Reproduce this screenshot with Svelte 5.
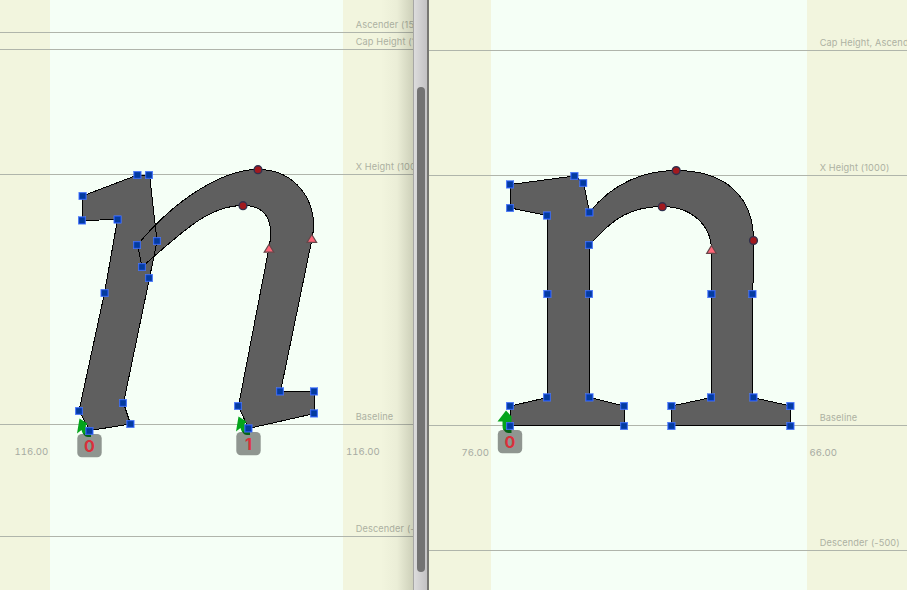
<script>
  const panes = [
    {
      id: 'italic', x: 0, width: 413, bodyX: 50, bodyW: 293, labelX: 356,
      metrics: [
        { y: 32, name: 'Ascender (1500)' },
        { y: 49, name: 'Cap Height (1450)' },
        { y: 174, name: 'X Height (1000)' },
        { y: 424, name: 'Baseline' },
        { y: 536, name: 'Descender (-500)' }
      ],
      bearings: [{ x: 14.5, y: 455, value: '116.00' }, { x: 346, y: 455, value: '116.00' }],
      contours: [
        'M137.5 175L149.5 175L157 241L149.5 278L123.500 403L130.5 424L90 430.500L79 411L104.500 293L117.500 219.500L82.500 220.500L82.500 196Z',
        'M137.5 245C175 199 223 169.500 258 169.500C294 169.500 320 200 312 239L280.500 391.500L314.500 391.500L314.500 413.500L248.500 428.500L238.500 406L269 248C274 223 268 205.500 243 205.500C210 205.500 185 229 142 267Z'
      ],
      corners: [[137.4,175],[149,175],[157,241],[149,278],[123,403],[130.4,424],[89.4,431],[79,411],[104.6,293],[117.6,219.5],[82,220.4],[82.600,196],[137,245],[142,267],[280,391.4],[314,391.4],[314,413.4],[248.4,428.4],[238,406]],
      curves: [[258, 169.7], [243, 205.7]],
      tangents: [[311.8, 238.700], [269, 248.5]],
      starts: [{ x: 89.5, y: 434, label: '0', tilt: true }, { x: 248.5, y: 432, label: '1', tilt: true }]
    },
    {
      id: 'roman', x: 429, width: 478, bodyX: 491, bodyW: 316, labelX: 820,
      metrics: [
        { y: 50, name: 'Cap Height, Ascender (1500)' },
        { y: 175, name: 'X Height (1000)' },
        { y: 425, name: 'Baseline' },
        { y: 550, name: 'Descender (-500)' }
      ],
      bearings: [{ x: 461.5, y: 456.4, value: '76.00' }, { x: 809.5, y: 456.4, value: '66.00' }],
      contours: [
        'M510.500 184.500L574.500 176L583.500 183L589.500 212.500C613 182 646 170.500 676 170.500C726 170.500 753.500 197 753.500 240.500L753.500 272L752.500 294L752.500 397.500L790.500 406L790.500 425.500L671.500 425.500L671.500 406L711.500 397.500L711.500 250C711.500 226 692 206.500 662.500 206.500C631 206.500 613 218 589.500 245L589.500 397.500L624.500 406L624.500 425.500L510.500 425.500L510.500 406L547.500 397.500L547.500 215.500L510.500 208Z'
      ],
      corners: [[510,184.4],[574.4,176],[583.2,183],[589.4,212.4],[589,245],[589,294],[589.4,397.4],[624,406],[624,426],[510,426],[510,406],[547,397.4],[547.4,294],[547,215.5],[510,208],[752.4,294],[753.4,397.4],[790.4,406],[790.4,426],[671.4,426],[671.4,406],[711,397.4],[711.4,294]],
      curves: [[676.2, 170.6], [662.3, 206.7], [753.5, 240.5]],
      tangents: [[711.5, 249.7]],
      starts: [{ x: 510, y: 430, label: '0', tilt: false }]
    }
  ];
</script>

{#snippet pane(p)}
  <section class="pane {p.id}">
    <svg width={p.width} height="590" viewBox="{p.x} 0 {p.width} 590">
      <rect class="body" x={p.bodyX} y="0" width={p.bodyW} height="590" />
      {#each p.metrics as m}
        <rect class="metric" x={p.x} y={m.y} width={p.width} height="1" />
        <text class="name" x={p.labelX - 0.3} y={m.y - 4}>{m.name}</text>
      {/each}
      {#each p.bearings as b}
        <text class="bearing" x={b.x} y={b.y}>{b.value}</text>
      {/each}
      {#each p.contours as d}<path class="fill" {d} />{/each}
      {#each p.contours as d}<path class="outline" {d} />{/each}
      {#each p.starts as s}
        <g transform="translate({s.x} {s.y})">
          {#if s.tilt}
            <path class="arrow" d="M-10-15.500L-2-10.500L-4-8L2-2V3H-3Q-7 1-8-4L-12.500-.5Z" />
          {:else}
            <path class="arrow" d="M-4-19.500L1.500-13.500V-8L0-8V3H-4Q-7.500 1-7.500-4V-8.500H-12.500Z" />
          {/if}
          <rect class="badge" x="-12.200" y="0" width="24.400" height="23.300" rx="4.500" />
          <path class="tail" d="M-6.500-.5H1.500V3H-1.500Q-4.500 3-6.500-.5Z" />
          <text class="number" x="0" y="18" text-anchor="middle">{s.label}</text>
        </g>
      {/each}
      {#each p.corners as [x, y]}
        <rect class="halo" x={x - 3.75} y={y - 3.75} width="7.5" height="7.5" />
        <rect class="corner" x={x - 2.75} y={y - 2.75} width="5.5" height="5.5" />
      {/each}
      {#each p.curves as [x, y]}<circle class="curve" cx={x} cy={y} r="3.9" />{/each}
      {#each p.tangents as [x, y]}
        <path class="tangent" transform="translate({x} {y})" d="M0-4.200L4.800 3.700H-4.800Z" />
      {/each}
    </svg>
  </section>
{/snippet}

<main>
  {@render pane(panes[0])}
  <div class="scrollbar"><div class="thumb"></div></div>
  {@render pane(panes[1])}
</main>

<style>
  main { display: flex; width: 907px; height: 590px; overflow: hidden; background: #f2f5de; }
  .pane { position: relative; overflow: hidden; flex: none; }
  .italic { width: 413px; }
  .roman { width: 478px; }
  .italic::after {
    content: '';
    position: absolute;
    inset: 0 0 0 auto;
    width: 32px;
    background: linear-gradient(to right, rgba(40, 40, 20, 0), rgba(40, 40, 20, .035) 50%, rgba(40, 40, 20, .18));
  }
  svg { display: block; }
  text { font-family: Inter, 'Liberation Sans', sans-serif; }
  .body { fill: #f5fff6; }
  .metric { fill: #b0b5ab; }
  .name { font-size: 9.2px; fill: #adb1a2; letter-spacing: .13px; }
  .bearing { font-size: 9.6px; fill: #a7aba2; letter-spacing: 0; font-variant-numeric: tabular-nums; }
  .fill { fill: #5f5f5f; shape-rendering: crispEdges; }
  .outline { fill: none; stroke: #000; stroke-width: 1; shape-rendering: crispEdges; }
  .arrow { fill: #04a51b; }
  .badge { fill: #8f9690; }
  .tail { fill: #056316; }
  .number { font-size: 16px; font-weight: 700; fill: #d9303a; }
  .halo { fill: #2053ee; stroke: #4f7ef8; stroke-width: .5; }
  .corner { fill: #043c9e; }
  .curve { fill: #a2191e; stroke: #30314e; stroke-width: 1.4; }
  .tangent { fill: #ff6577; stroke: #65474a; stroke-width: 1.2; }
  .scrollbar {
    box-sizing: border-box;
    flex: none;
    width: 16px;
    padding: 87px 0 18px 3px;
    border-left: 1px solid #a7a7a5;
    border-right: 2px solid #777773;
    background: linear-gradient(to right, #dcdcdc, #c3c2c4);
  }
  .thumb { width: 8px; height: 485px; border-radius: 4px; background: #737373; }
</style>
